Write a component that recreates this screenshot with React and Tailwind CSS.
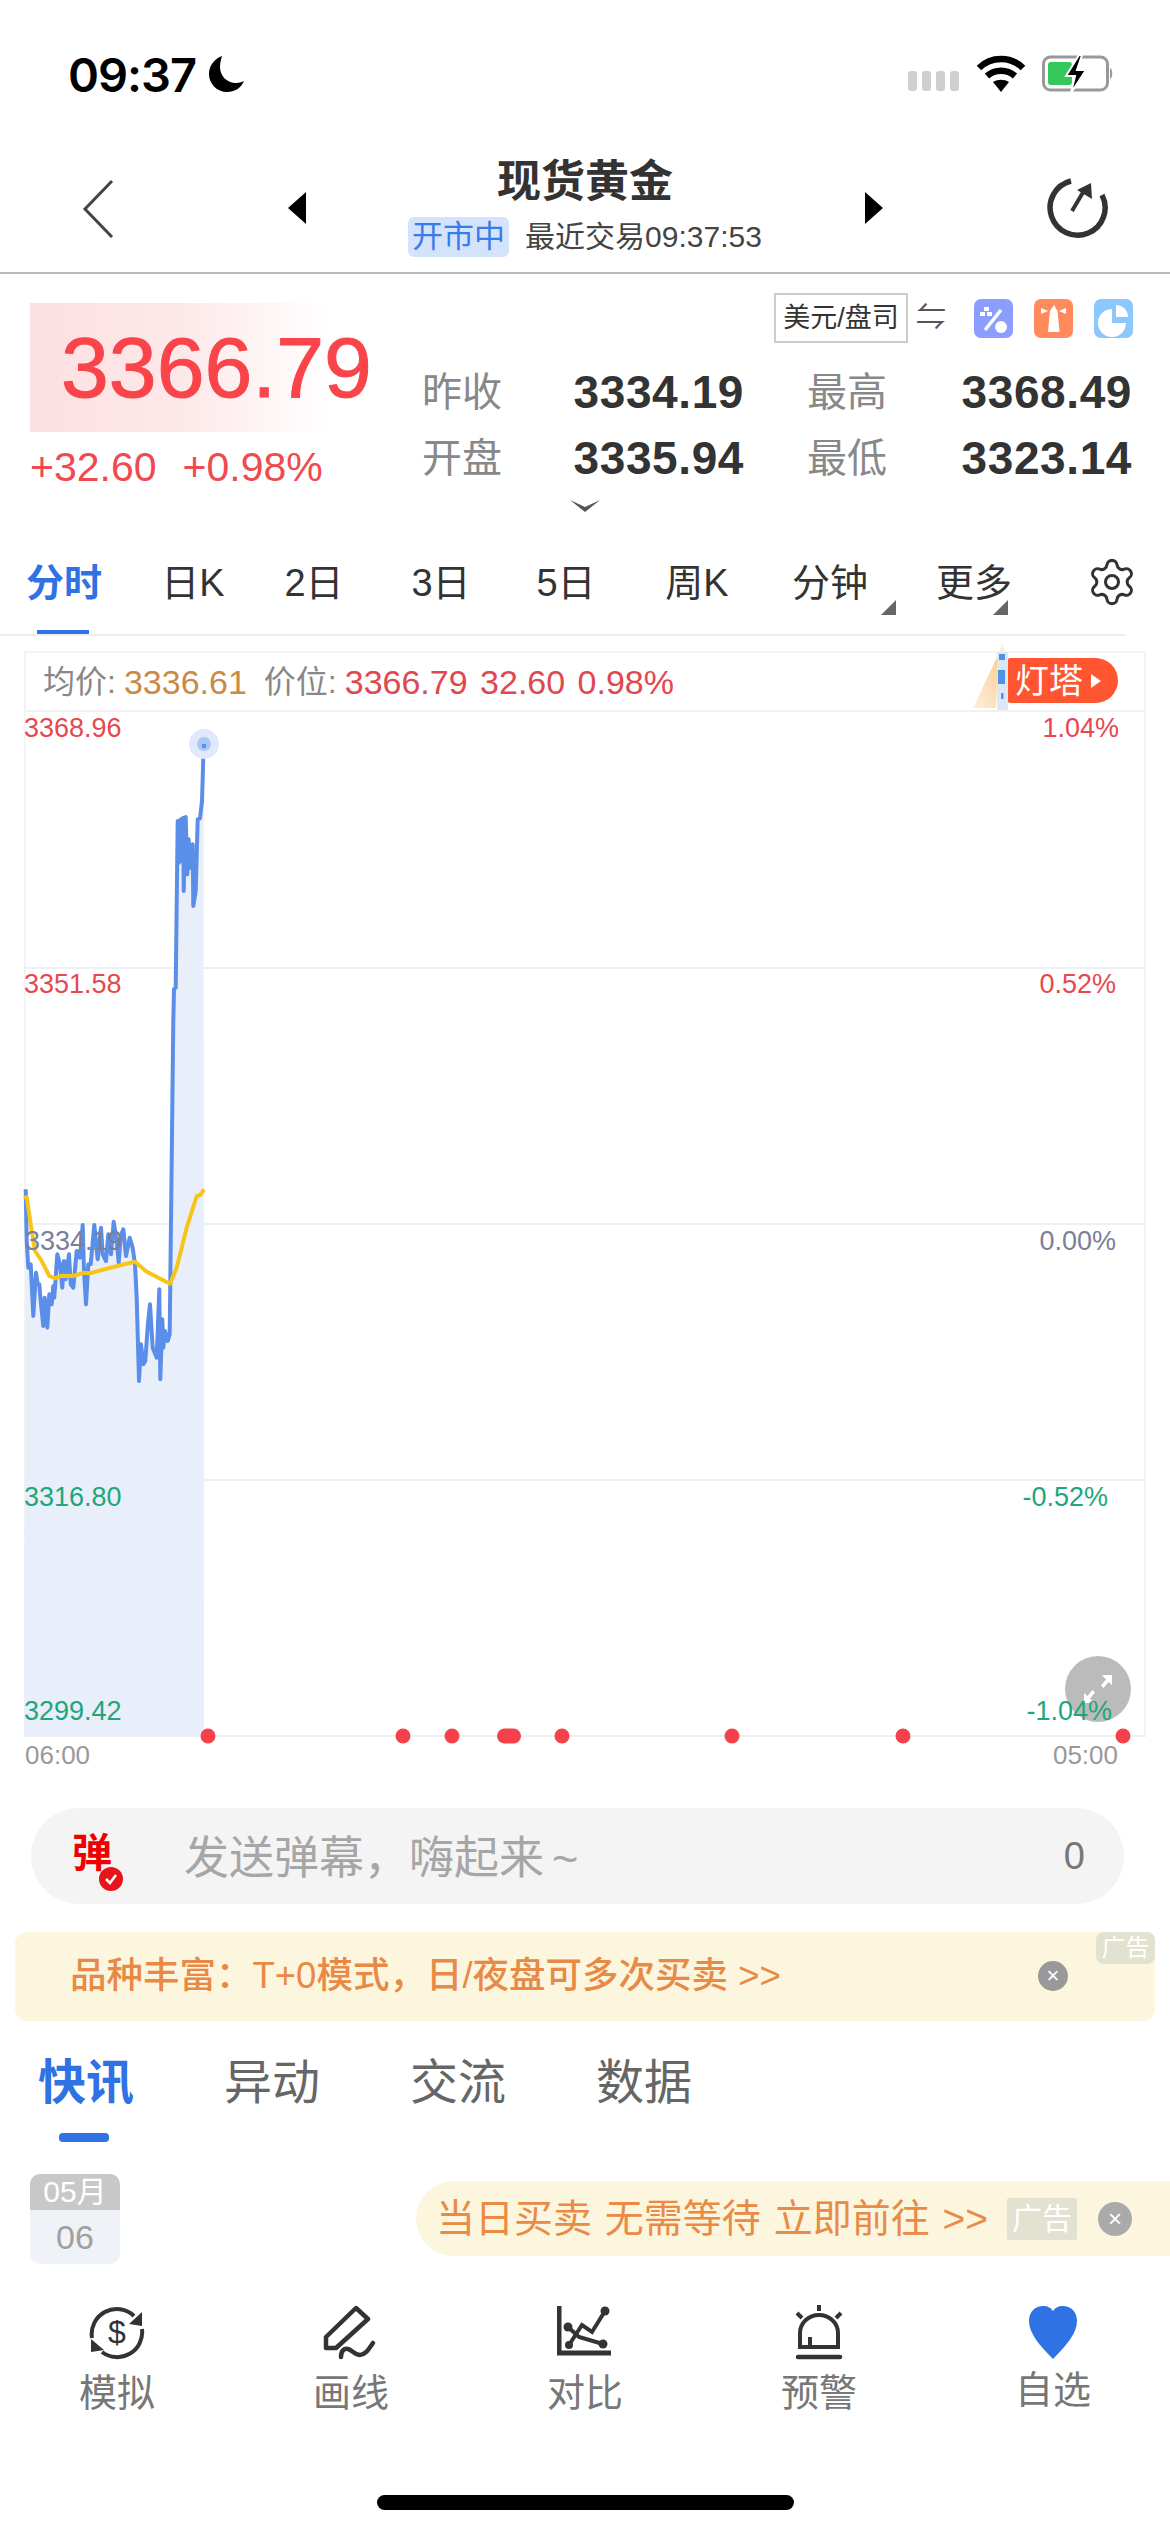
import { Settings } from 'lucide-react';

const upper = [[520,900],[522,805],[527,800],[533,300],[537,425],[542,295],[546,420],[550,290],[551,510],[557,288],[562,460],[566,355],[570,440],[574,375],[578,370],[580,555],[587,510],[593,295],[600,292],[606,240],[611,70]]
  .map(([x, y]) => [x / 3 - 24, 9 + y / 3]);

const lower = [[77,145],[80,300],[85,380],[92,370],[100,525],[108,395],[113,430],[118,430],[122,480],[130,555],[134,470],[142,560],[148,460],[155,490],[160,435],[163,470],[172,340],[180,370],[187,440],[192,360],[197,415],[207,340],[212,430],[220,440],[230,330],[240,350],[248,252],[252,390],[258,490],[265,370],[272,370],[283,252],[293,355],[303,260],[308,340],[318,360],[325,280],[333,340],[341,242],[350,300],[356,365],[362,285],[370,265],[378,345],[389,290],[398,320],[405,370],[410,470],[417,720],[423,610],[430,670],[436,660],[444,545],[450,490],[458,620],[470,650],[478,445],[481,715],[487,535],[490,620],[495,570],[503,600],[509,580]]
  .map(([x, y]) => [x / 3 - 24, 429 + y / 3]);

const average = [[72,172],[80,168],[92,250],[105,330],[125,360],[148,405],[165,412],[185,404],[220,405],[250,395],[270,397],[340,378],[405,362],[440,392],[510,428],[530,380],[560,260],[590,165],[600,163],[612,145]]
  .map(([x, y]) => [x / 3 - 24, 429 + y / 3]);

const price = [...lower, ...upper];
const toPoints = (pts) => pts.map(([x, y]) => `${x.toFixed(1)},${y.toFixed(1)}`).join(' ');

const periods = [
  { label: '分时', width: 'w-[128px]', active: true },
  { label: '日K', width: 'w-[130px]' },
  { label: '2日', width: 'w-[112px]' },
  { label: '3日', width: 'w-[142px]' },
  { label: '5日', width: 'w-[108px]' },
  { label: '周K', width: 'w-[154px]' },
  { label: '分钟', width: 'w-[112px]', menu: true },
  { label: '更多', width: 'w-[176px]', menu: true },
];

const axisLabels = [
  { text: '3368.96', pos: 'left-0 top-0', color: 'text-[#e6484f]' },
  { text: '3351.58', pos: 'left-0 top-[256px]', color: 'text-[#e6484f]' },
  { text: '3334.19', pos: 'left-px top-[513px]', color: 'text-[#7a8099]' },
  { text: '3316.80', pos: 'left-0 top-[769px]', color: 'text-[#1fa67a]' },
  { text: '3299.42', pos: 'left-0 top-[983px]', color: 'text-[#1fa67a]' },
  { text: '1.04%', pos: 'right-[27px] top-0', color: 'text-[#e6484f]' },
  { text: '0.52%', pos: 'right-[30px] top-[256px]', color: 'text-[#e6484f]' },
  { text: '0.00%', pos: 'right-[30px] top-[513px]', color: 'text-[#7a8099]' },
  { text: '-0.52%', pos: 'right-[38px] top-[769px]', color: 'text-[#1fa67a]' },
  { text: '-1.04%', pos: 'right-[34px] top-[983px]', color: 'text-[#1fa67a]' },
];

function StatusBar() {
  return (
    <div className="flex h-[148px] items-center justify-between pl-[68px] pr-[56px]">
      <div className="flex items-center gap-[12px]">
        <span className="font-['Inter',sans-serif] text-[47px] font-semibold leading-none tracking-[-1px] text-black">09:37</span>
        <svg width="38" height="38" viewBox="0 0 38 38">
          <path d="M14 1C6 4 1 11 1 19c0 10 8 18 18 18 8 0 14-4 17-11-2 1-5 2-8 2C19 28 12 21 12 12c0-4 1-8 2-11z" fill="#000" />
        </svg>
      </div>
      <div className="flex items-center">
        <div className="mt-[14px] flex gap-[5px]">
          <i className="h-[20px] w-[9px] rounded-[3px] bg-[#cfcfcf]" />
          <i className="h-[20px] w-[9px] rounded-[3px] bg-[#cfcfcf]" />
          <i className="h-[20px] w-[9px] rounded-[3px] bg-[#cfcfcf]" />
          <i className="h-[20px] w-[9px] rounded-[3px] bg-[#cfcfcf]" />
        </div>
        <svg className="ml-[17px]" width="50" height="38" viewBox="0 0 50 38" fill="none" stroke="#000" strokeWidth="6.5">
          <path d="M3 13C15 1 35 1 47 13" />
          <path d="M11 21c8-7 20-7 28 0" />
          <path d="M25 37l-8-10c5-3 11-3 16 0z" fill="#000" stroke="none" />
        </svg>
        <svg className="ml-[16px]" width="72" height="38" viewBox="0 0 72 38">
          <rect x="1.5" y="2" width="64" height="33" rx="7" fill="none" stroke="#999" strokeWidth="3" />
          <rect x="6" y="7" width="24" height="23" rx="3" fill="#34c759" />
          <path d="M68 13c3 1 3 10 0 11z" fill="#999" />
          <path d="M37 0L24 21h9l-4 17 15-23h-9l5-15z" fill="#000" stroke="#fff" strokeWidth="2" />
        </svg>
      </div>
    </div>
  );
}

function NavBar() {
  return (
    <div className="flex h-[126px] items-start border-b-2 border-[#bbbbbb] pl-[82px]">
      <svg className="mt-[32px]" width="32" height="58" viewBox="0 0 32 58" fill="none" stroke="#444" strokeWidth="3">
        <path d="M30 1L3 29l27 28" />
      </svg>
      <svg className="ml-[174px] mt-[44px]" width="18" height="32" viewBox="0 0 18 32"><path d="M18 0v32L0 16z" fill="#000" /></svg>
      <div className="ml-[19px] flex w-[520px] flex-col items-center">
        <h1 className="mt-[9px] text-[44px] font-bold leading-[50px] text-[#333]">现货黄金</h1>
        <div className="mt-[10px] flex items-center">
          <span className="rounded-[6px] bg-[#d4e3fb] px-[4px] text-[31px] leading-[40px] text-[#3b7be6]">开市中</span>
          <span className="ml-[16px] text-[30px] leading-[40px] text-[#444]">最近交易09:37:53</span>
        </div>
      </div>
      <svg className="ml-[20px] mt-[44px]" width="18" height="32" viewBox="0 0 18 32"><path d="M0 0v32l18-16z" fill="#000" /></svg>
      <svg className="ml-[164px] mt-[29px]" width="62" height="62" viewBox="0 0 62 62" fill="none" stroke="#333" strokeWidth="5.5">
        <path d="M24 4A27.5 27.5 0 1 0 55 18" />
        <path d="M25 34l13-22" strokeWidth="4" />
        <path d="M30 13l14-7 1 16z" fill="#333" stroke="none" />
      </svg>
    </div>
  );
}

function Stat({ label, value, width }) {
  return (
    <div className={`flex items-center justify-between ${width}`}>
      <span className="text-[40px] leading-[48px] text-[#888]">{label}</span>
      <span className="text-[46px] font-bold leading-[48px] tracking-[0.6px] text-[#333]">{value}</span>
    </div>
  );
}

function QuotePanel() {
  return (
    <div className="flex h-[256px] w-full">
      <div className="w-[392px] pl-[30px] pt-[29px]">
        <div className="h-[129px] w-[300px] bg-gradient-to-r from-[#fde0e1] via-[#fde8e9] to-white pl-[31px] pt-[18px] text-[86px] font-normal leading-[92px] text-[#f9444a] [-webkit-text-stroke:1px_#f9444a]">
          3366.79
        </div>
        <div className="mt-[11px] flex gap-[26px] whitespace-nowrap text-[41px] leading-[48px] text-[#ee4a50]">
          <span>+32.60</span>
          <span>+0.98%</span>
        </div>
      </div>
      <div className="w-[778px] pl-[30px]">
        <div className="flex h-[82px] items-start pt-[19px]">
          <div className="ml-[352px] flex h-[50px] w-[134px] items-center justify-center border-2 border-[#cccccc] text-[27px] text-[#333]">美元/盘司</div>
          <span className="ml-[8px] mt-[4px] w-[32px] text-[30px] leading-[40px] text-[#555]">⇋</span>
          <div className="ml-[26px] mt-[6px] flex gap-[21px]">
            <div className="h-[39px] w-[39px] rounded-[7px] bg-[#8b9eff]">
              <svg width="39" height="39" viewBox="0 0 39 39" fill="#fff">
                <path d="M27 11L11 31" stroke="#fff" strokeWidth="3.5" />
                <circle cx="27" cy="28" r="6" />
                <rect x="10" y="8" width="5" height="4" />
                <rect x="6" y="13" width="5" height="4" />
                <rect x="13" y="13" width="5" height="4" />
              </svg>
            </div>
            <div className="h-[39px] w-[39px] rounded-[7px] bg-[#ff8a5c]">
              <svg width="39" height="39" viewBox="0 0 39 39" fill="#fff">
                <path d="M20 6l3.5 6 2 21H14l2-21z" />
                <path d="M7 9l7 3-7 3zM32 9l-7 3 7 3z" />
              </svg>
            </div>
            <div className="h-[39px] w-[39px] rounded-[7px] bg-[#8cc8ff]">
              <svg width="39" height="39" viewBox="0 0 39 39" fill="#fff">
                <path d="M18 10A14 14 0 1 0 32 24H18z" />
                <path d="M22 6A12 12 0 0 1 34 18H22z" />
              </svg>
            </div>
          </div>
        </div>
        <div className="mt-[12px] flex gap-[63px]">
          <Stat label="昨收" value="3334.19" width="w-[322px]" />
          <Stat label="最高" value="3368.49" width="w-[325px]" />
        </div>
        <div className="mt-[18px] flex gap-[63px]">
          <Stat label="开盘" value="3335.94" width="w-[322px]" />
          <Stat label="最低" value="3323.14" width="w-[325px]" />
        </div>
        <svg className="ml-[148px] mt-[18px]" width="30" height="12" viewBox="0 0 30 12">
          <path d="M0 0l15 7 15-7-15 12z" fill="#555" />
        </svg>
      </div>
    </div>
  );
}

function PeriodTabs() {
  return (
    <div className="flex h-[106px] w-[1125px] items-start border-b-2 border-[#eeeeee]">
      {periods.map((p) => (
        <div key={p.label} className={`relative flex h-[104px] shrink-0 justify-center pt-[30px] ${p.width}`}>
          <span className={`text-[38px] leading-[46px] ${p.active ? 'font-semibold text-[#2f72e4]' : 'text-[#333]'}`}>{p.label}</span>
          {p.active && <i className="absolute bottom-0 left-[37px] h-[4px] w-[52px] bg-[#2f72e4]" />}
          {p.menu && (
            <svg className="absolute bottom-[19px] left-[107px]" width="15" height="15" viewBox="0 0 15 15">
              <path d="M15 0v15H0z" fill="#666" />
            </svg>
          )}
        </div>
      ))}
      <Settings className="ml-[24px] mt-[26px] shrink-0 text-[#333]" size={52} strokeWidth={1.4} />
    </div>
  );
}

function ChartHeader() {
  return (
    <div className="relative flex h-[59px] items-center border-b-2 border-[#f1f1f1] pl-[17px] text-[34px] leading-none">
      <span className="text-[32px] text-[#888]">均价:</span>
      <span className="ml-[8px] text-[#c98a45]">3336.61</span>
      <span className="ml-[17px] text-[32px] text-[#888]">价位:</span>
      <span className="ml-[8px] text-[#e0474f] [word-spacing:3px]">3366.79 32.60 0.98%</span>
      <div className="absolute right-[26px] top-[5px] flex h-[45px] w-[111px] items-center rounded-r-[23px] rounded-l-[4px] bg-[#ff5530] pl-[8px] text-[34px] text-white">
        灯塔
        <svg className="ml-[8px]" width="10" height="14" viewBox="0 0 10 14"><path d="M0 0v14l10-7z" fill="#fff" /></svg>
      </div>
      <svg className="absolute right-[134px] top-[-10px]" width="38" height="68" viewBox="0 0 38 68">
        <defs>
          <linearGradient id="beam" x1="1" y1="0" x2="0" y2="1">
            <stop offset="0" stopColor="#fbcf95" />
            <stop offset="1" stopColor="#fdf0de" />
          </linearGradient>
        </defs>
        <path d="M26 12L1 65h23z" fill="url(#beam)" />
        <path d="M30 0l-3 9h6z" fill="#fdeed8" />
        <rect x="25" y="9" width="11" height="58" fill="#dbe7f5" />
        <rect x="27" y="11" width="6" height="6" fill="#4d94e8" />
        <rect x="26" y="27" width="7" height="14" fill="#4d94e8" />
        <rect x="29" y="50" width="2.5" height="6" fill="#4d94e8" />
      </svg>
    </div>
  );
}

function Chart() {
  return (
    <div className="relative mx-[-2px] h-[1024px]">
      <svg className="absolute inset-0 overflow-visible" width="1122" height="1024" viewBox="0 0 1122 1024">
        {[256, 512, 768, 1024].map((y) => (
          <line key={y} x1="0" x2="1122" y1={y} y2={y} stroke="#eef0f3" strokeWidth="2" />
        ))}
        <polygon points={`0,1024 ${toPoints(price)} 180,1024`} fill="#e8effb" />
        <polyline points={toPoints(price)} fill="none" stroke="#5a8ee8" strokeWidth="4" strokeLinejoin="round" />
        <polyline points={toPoints(average)} fill="none" stroke="#f7c518" strokeWidth="4" strokeLinejoin="round" />
        <circle cx="180" cy="32" r="15" fill="#dfe9fb" />
        <circle cx="180" cy="32" r="7" fill="#a9c6f5" />
        <line x1="180" x2="180" y1="32" y2="36" stroke="#5a8ee8" strokeWidth="4" />
        {[184, 379, 428, 538, 708, 879, 1099].map((x) => (
          <circle key={x} cx={x} cy="1024" r="7.5" fill="#f5424a" />
        ))}
        <rect x="473" y="1016.5" width="24" height="15" rx="7.5" fill="#f5424a" />
      </svg>
      <div className="absolute right-[15px] top-[944px] flex h-[66px] w-[66px] items-center justify-center rounded-full bg-[#bbbbbb]">
        <svg width="32" height="32" viewBox="0 0 32 32" fill="#fff">
          <path d="M20 2h10v10l-3.5-3-5 6-2.500-2.500 5-6z" />
          <path d="M12 30H2V20l3.5 3 5-6 2.500 2.500-5 6z" />
        </svg>
      </div>
      {axisLabels.map((l) => (
        <span key={l.text} className={`absolute text-[27px] leading-[32px] ${l.pos} ${l.color}`}>{l.text}</span>
      ))}
    </div>
  );
}

function AdBadge({ className }) {
  return <span className={`flex items-center justify-center bg-[#e3e1d0] text-white ${className}`}>广告</span>;
}

function BottomIcon({ name }) {
  if (name === 'sim') {
    return (
      <svg width="56" height="56" viewBox="0 0 56 56" fill="none" stroke="#333" strokeWidth="4">
        <path d="M3 33A25 25 0 0 1 45 11" />
        <path d="M53 24A25 25 0 0 1 13 47" />
        <path d="M53 7v14l-13-2z" fill="#333" stroke="none" />
        <path d="M2 34v13l13-2z" fill="#333" stroke="none" />
        <text x="28" y="38" textAnchor="middle" fontSize="32" fontWeight="400" fill="#333" stroke="none">$</text>
      </svg>
    );
  }
  if (name === 'draw') {
    return (
      <svg width="56" height="56" viewBox="0 0 56 56" fill="none" stroke="#333" strokeWidth="4.5" strokeLinejoin="round" strokeLinecap="round">
        <path d="M33 3l12 11-32 29-10 0 0-11z" />
        <path d="M18 52c0-6 3-9 7-8s7 6 12 6 8-5 13-12" />
      </svg>
    );
  }
  if (name === 'compare') {
    return (
      <svg width="56" height="56" viewBox="0 0 56 56" fill="none" stroke="#333" strokeWidth="4">
        <path d="M2 1v47h52" strokeWidth="5" />
        <path d="M11 22l11 10 24 7" />
        <path d="M12 40L25 20l10 7L48 6" />
        <g fill="#333" stroke="none">
          <circle cx="11" cy="22" r="4.5" />
          <circle cx="46" cy="39" r="4.5" />
          <circle cx="12" cy="40" r="4" />
          <circle cx="48" cy="6" r="4.5" />
        </g>
      </svg>
    );
  }
  if (name === 'alert') {
    return (
      <svg width="56" height="56" viewBox="0 0 56 56" fill="none" stroke="#333" strokeWidth="4">
        <path d="M28 0v6M6 8l5 5M50 8l-5 5" strokeWidth="4" />
        <path d="M9 42V28a19 18 0 0 1 38 0v14z" />
        <path d="M7 52h42" strokeWidth="4.5" strokeLinecap="round" />
        <path d="M19 42V32" />
      </svg>
    );
  }
  return (
    <svg width="56" height="56" viewBox="0 0 56 56">
      <path d="M28 54C14 40 4 28 4 16 4 6 11 1 18 1c5 0 8 2 10 5 2-3 5-5 10-5 7 0 14 5 14 15 0 12-10 24-24 38z" fill="#2f72e4" />
    </svg>
  );
}

const bottomItems = [
  { key: 'sim', label: '模拟' },
  { key: 'draw', label: '画线' },
  { key: 'compare', label: '对比' },
  { key: 'alert', label: '预警' },
  { key: 'fav', label: '自选' },
];

export default function App() {
  return (
    <div className="h-[2532px] w-[1170px] overflow-hidden bg-white font-['Liberation_Sans','Noto_Sans_CJK_SC',sans-serif]">
      <StatusBar />
      <NavBar />
      <QuotePanel />
      <PeriodTabs />

      <div className="ml-[24px] mt-[15px] w-[1122px] border-x-2 border-t-2 border-[#f3f3f3]">
        <ChartHeader />
        <Chart />
      </div>
      <div className="flex h-[72px] w-[1146px] justify-between pl-[25px] pr-[28px] pt-[3px] text-[26px] leading-[32px] text-[#999]">
        <span>06:00</span>
        <span>05:00</span>
      </div>

      <div className="ml-[31px] flex h-[96px] w-[1093px] items-center rounded-full bg-[#f4f4f4] pl-[41px] pr-[39px]">
        <div className="relative h-[50px] w-[48px]">
          <span className="text-[40px] font-bold leading-[44px] text-[#f00000]">弹</span>
          <span className="absolute bottom-[-10px] right-[-3px] flex h-[24px] w-[24px] items-center justify-center rounded-full bg-[#e8141c]">
            <svg width="14" height="12" viewBox="0 0 14 12" fill="none" stroke="#fff" strokeWidth="2.5"><path d="M2 6l4 4 6-8" /></svg>
          </span>
        </div>
        <span className="ml-[64px] mt-[4px] flex-1 text-[45px] leading-none text-[#a6a6a6]">发送弹幕，嗨起来<span className="ml-[8px]">~</span></span>
        <span className="text-[38px] leading-none text-[#777]">0</span>
      </div>

      <div className="relative mx-[15px] mt-[28px] flex h-[89px] items-center rounded-[12px] bg-[#fbf6dd] pl-[55px]">
        <span className="text-[36.5px] font-medium leading-none text-[#e88a45]">品种丰富：T+0模式，日/夜盘可多次买卖 &gt;&gt;</span>
        <AdBadge className="absolute right-0 top-0 h-[32px] w-[59px] rounded-[8px] text-[24px]" />
        <span className="absolute left-[1023px] top-[29px] flex h-[30px] w-[30px] items-center justify-center rounded-full bg-[#999] text-[22px] leading-none text-white">×</span>
      </div>

      <div className="relative flex h-[121px] items-start gap-[90px] pl-[38px] pt-[38px] text-[48px] leading-[48px] text-[#666]">
        <span className="font-semibold text-[#2f72e4]">快讯</span>
        <span>异动</span>
        <span>交流</span>
        <span>数据</span>
        <i className="absolute left-[59px] top-[112px] h-[9px] w-[50px] rounded-[4px] bg-[#2f72e4]" />
      </div>

      <div className="flex h-[100px] items-start pl-[30px] pt-[32px]">
        <div className="h-[90px] w-[90px] overflow-hidden rounded-[10px] bg-[#eff2f6] text-center">
          <div className="h-[36px] bg-[#c8c8c8] text-[30px] leading-[36px] text-white">05月</div>
          <div className="text-[34px] leading-[54px] text-[#a0a0a0]">06</div>
        </div>
        <div className="ml-[296px] mt-[7px] flex h-[75px] flex-1 items-center rounded-l-[38px] bg-[#fbf6dd] pl-[20px]">
          <span className="w-[571px] whitespace-nowrap text-[39px] leading-none text-[#ea8a45] [word-spacing:2px]">当日买卖 无需等待 立即前往 &gt;&gt;</span>
          <AdBadge className="h-[42px] w-[70px] rounded-[2px] text-[30px]" />
          <span className="ml-[21px] flex h-[34px] w-[34px] items-center justify-center rounded-full bg-[#aaa] text-[24px] leading-none text-white">×</span>
        </div>
      </div>

      <div className="mt-[63px] flex h-[115px]">
        {bottomItems.map((item) => (
          <div key={item.key} className="flex w-[234px] flex-col items-center">
            <BottomIcon name={item.key} />
            <span className={`text-[38px] leading-[46px] text-[#777] ${item.key === 'fav' ? 'mt-[6px]' : 'mt-[9px]'}`}>{item.label}</span>
          </div>
        ))}
      </div>

      <div className="mx-auto mt-[75px] h-[15px] w-[417px] rounded-full bg-black" />
    </div>
  );
}
